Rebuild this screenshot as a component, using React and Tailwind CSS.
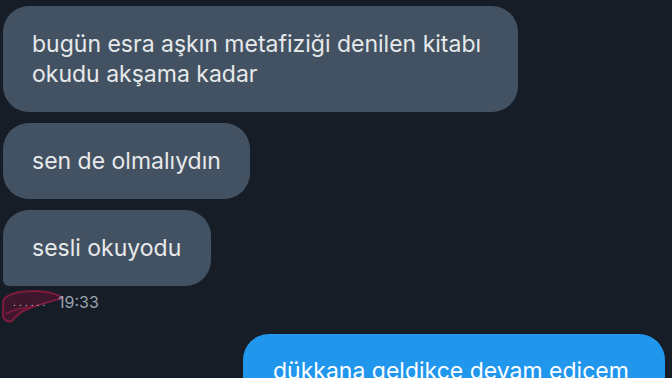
const Bubble = ({ children, className = "" }) => (
  <div
    className={`bg-[#435262] text-[#e7e9ea] text-[23px] leading-[30px] pl-[29px] pr-[28px] py-[23px] ${className}`}
  >
    {children}
  </div>
);

export default function App() {
  return (
    <div
      className="w-[672px] h-[378px] overflow-hidden bg-[#161d27] flex flex-col items-start pl-[3px] pt-[6px]"
      style={{ fontFamily: 'Inter, "Open Sans", sans-serif' }}
    >
      <Bubble className="w-[515px] rounded-[26px]">
        bugün esra aşkın metafiziği denilen kitabı
        <br />
        okudu akşama kadar
      </Bubble>
      <Bubble className="mt-[11px] rounded-[26px] w-[247px]">sen de olmalıydın</Bubble>
      <Bubble className="mt-[11px] rounded-[26px] rounded-bl-[6px] w-[208px] py-[22px]">sesli okuyodu</Bubble>

      {/* time, date scribbled out */}
      <div className="relative mt-[4px] flex items-center h-[24px] text-[16px] text-[#9aa4ae]">
        <svg
          className="absolute left-[-3px] top-[-3px]"
          width="66"
          height="38"
          viewBox="0 0 66 38"
          fill="none"
        >
          <path
            d="M4 12 C12 4 30 3 46 5 C54 6 60 9 63 11 C52 14 40 17 30 21 C22 24 16 28 12 34 C6 36 2 31 3 25 C4 19 2 15 4 12 Z"
            fill="#4a1630"
            fillOpacity="0.8"
            stroke="#7d1c3c"
            strokeWidth="2"
            strokeLinejoin="round"
          />
          <path
            d="M6 27 C12 23 22 21 30 20"
            stroke="#7d1c3c"
            strokeWidth="1.6"
            strokeLinecap="round"
          />
        </svg>
        <span className="relative w-[55px] text-[10px] text-[#c9ccd2] tracking-[3px] pl-[10px] leading-none">
          ......
        </span>
        <span className="relative">19:33</span>
      </div>

      <div className="self-end mr-[7px] mt-[20px] w-[422px] bg-[#2196ed] text-white text-[23px] leading-[30px] rounded-[26px] pl-[30px] pt-[22px] pb-[20px] whitespace-nowrap">
        dükkana geldikce devam edicem
      </div>
    </div>
  );
}
